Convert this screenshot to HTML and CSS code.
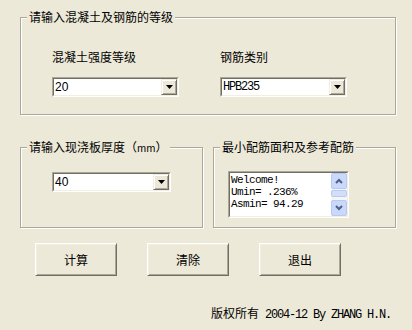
FILE: index.html
```html
<!DOCTYPE html>
<html>
<head>
  <meta charset="utf-8">
  <title>最小配筋计算</title>
  <link rel="stylesheet" href="styles.css">
</head>
<body>
  <div class="window">
    <div class="group group-grade">
      <div class="group-title">请输入混凝土及钢筋的等级</div>
      <div class="grade-grid">
        <div class="field-label">混凝土强度等级</div>
        <div class="field-label">钢筋类别</div>
        <div class="combo">
          <div class="combo-inner">
            <span class="combo-value sans">20</span>
            <span class="combo-btn"><svg width="7" height="4" viewBox="0 0 7 4"><polygon points="0,0 7,0 3.5,4" fill="#000"/></svg></span>
          </div>
        </div>
        <div class="combo">
          <div class="combo-inner">
            <span class="combo-value mono">HPB235</span>
            <span class="combo-btn"><svg width="7" height="4" viewBox="0 0 7 4"><polygon points="0,0 7,0 3.5,4" fill="#000"/></svg></span>
          </div>
        </div>
      </div>
    </div>

    <div class="group-row">
      <div class="group group-small">
        <div class="group-title">请输入现浇板厚度（<span class="mm">mm</span>）</div>
        <div class="group-body">
          <div class="combo combo-thick">
            <div class="combo-inner">
              <span class="combo-value sans">40</span>
              <span class="combo-btn"><svg width="7" height="4" viewBox="0 0 7 4"><polygon points="0,0 7,0 3.5,4" fill="#000"/></svg></span>
            </div>
          </div>
        </div>
      </div>
      <div class="group group-small">
        <div class="group-title">最小配筋面积及参考配筋</div>
        <div class="group-body result-body">
          <div class="memo">
            <div class="memo-inner">
              <div class="memo-text mono">Welcome!<br>Umin= .236%<br>Asmin= 94.29</div>
              <div class="scrollbar">
                <span class="scroll-btn"><svg width="8" height="6" viewBox="0 0 8 6"><polyline points="1,5 4,2 7,5" fill="none" stroke="#4d6185" stroke-width="2"/></svg></span>
                <span class="scroll-thumb"></span>
                <span class="scroll-track"></span>
                <span class="scroll-btn"><svg width="8" height="6" viewBox="0 0 8 6"><polyline points="1,1 4,4 7,1" fill="none" stroke="#4d6185" stroke-width="2"/></svg></span>
              </div>
            </div>
          </div>
        </div>
      </div>
    </div>

    <div class="buttons">
      <button class="btn">计算</button>
      <button class="btn">清除</button>
      <button class="btn">退出</button>
    </div>

    <div class="copyright">版权所有<span class="mono"> 2004-12 By ZHANG H.N.</span></div>
  </div>
</body>
</html>
```

FILE: styles.css
```css
body {
  margin: 0;
  background: #ece9d8;
  font-family: "Noto Sans CJK SC", sans-serif;
  font-size: 12px;
  color: #000;
}
.window {
  padding: 17px 0 0 20px;
}
.sans {
  font-family: "Liberation Sans", sans-serif;
  font-size: 12px;
}
.mono {
  font-family: "Liberation Mono", monospace;
  font-size: 12px;
  letter-spacing: -1.2px;
}
.group {
  box-sizing: border-box;
  border: 1px solid #aca899;
  box-shadow: 1px 1px 0 #fff, inset 1px 1px 0 #fff;
}
.group-title {
  display: table;
  margin: -9px 0 0 6px;
  padding: 0 2px;
  background: #ece9d8;
  line-height: 15px;
}
.mm {
  font-size: 10px;
}
.group-grade {
  width: 376px;
  height: 98px;
}
.grade-grid {
  display: grid;
  grid-template-columns: 127px 127px;
  column-gap: 41px;
  row-gap: 13px;
  padding: 25px 0 0 31px;
}
.field-label {
  line-height: 15px;
}
.combo {
  box-sizing: border-box;
  width: 127px;
  height: 20px;
  border: 1px solid;
  border-color: #aca899 #fff #fff #aca899;
  background: #fff;
}
.combo-inner {
  box-sizing: border-box;
  height: 100%;
  border: 1px solid;
  border-color: #716f64 #f1efe2 #f1efe2 #716f64;
  display: flex;
  align-items: center;
}
.combo-value {
  flex: 1;
  padding-left: 1px;
  line-height: 16px;
}
.combo-btn {
  box-sizing: border-box;
  width: 16px;
  height: 16px;
  background: #ece9d8;
  border: 1px solid;
  border-color: #f1efe2 #716f64 #716f64 #f1efe2;
  box-shadow: inset 1px 1px 0 #fff, inset -1px -1px 0 #aca899;
  display: flex;
  align-items: center;
  justify-content: center;
}
.group-row {
  display: flex;
  gap: 10px;
  margin-top: 32px;
}
.group-small {
  width: 183px;
  height: 81px;
}
.group-body {
  padding: 17px 0 0 31px;
}
.combo-thick {
  width: 119px;
}
.result-body {
  padding-left: 14px;
}
.memo {
  box-sizing: border-box;
  width: 121px;
  height: 47px;
  border: 1px solid;
  border-color: #aca899 #fff #fff #aca899;
  background: #fff;
}
.memo-inner {
  box-sizing: border-box;
  height: 100%;
  border: 1px solid;
  border-color: #716f64 #f1efe2 #f1efe2 #716f64;
  display: flex;
}
.memo-text {
  flex: 1;
  padding: 1px 0 0 1px;
  font-size: 11px;
  letter-spacing: -0.6px;
  line-height: 12px;
  white-space: nowrap;
  overflow: hidden;
}
.scrollbar {
  width: 16px;
  display: flex;
  flex-direction: column;
  background: #f6f6f1;
}
.scroll-btn {
  box-sizing: border-box;
  height: 16px;
  border: 1px solid #b7caf5;
  border-radius: 2px;
  background: #c9d8fb;
  display: flex;
  align-items: center;
  justify-content: center;
}
.scroll-thumb {
  box-sizing: border-box;
  height: 7px;
  margin-top: 1px;
  border: 1px solid #b7caf5;
  border-radius: 2px;
  background: #d3defa;
}
.scroll-track {
  flex: 1;
}
.buttons {
  display: flex;
  gap: 30px;
  margin: 15px 0 0 15px;
}
.btn {
  box-sizing: border-box;
  width: 82px;
  height: 33px;
  padding: 0;
  font: inherit;
  color: #000;
  background: #ece9d8;
  border: 1px solid;
  border-color: #fff #716f64 #716f64 #fff;
  border-radius: 0;
  box-shadow: inset 1px 1px 0 #f1efe2, inset -1px -1px 0 #aca899;
}
.copyright {
  margin: 29px 0 0 191px;
  line-height: 15px;
  white-space: nowrap;
}
```
